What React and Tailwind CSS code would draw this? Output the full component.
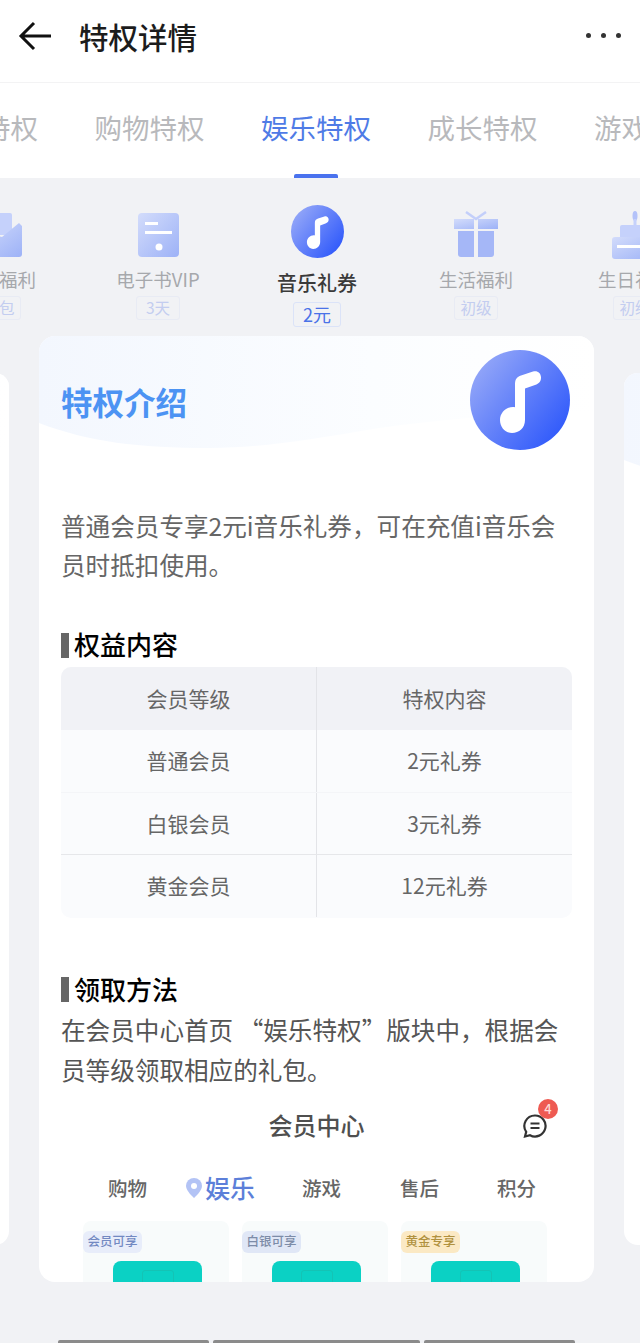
const font = { fontFamily: '"Noto Sans CJK SC", "Noto Sans", sans-serif' };

const TABS = ["专属特权", "购物特权", "娱乐特权", "成长特权", "游戏特权"];

const PERKS = [
  { name: "礼包福利", badge: "礼包", icon: "mail" },
  { name: "电子书VIP", badge: "3天", icon: "book" },
  { name: "音乐礼券", badge: "2元", icon: "music", active: true },
  { name: "生活福利", badge: "初级", icon: "gift" },
  { name: "生日礼包", badge: "初级", icon: "cake" },
];

const ROWS = [
  ["普通会员", "2元礼券", "border-[#f4f5f8]"],
  ["白银会员", "3元礼券", "border-[#e6e7ea]"],
  ["黄金会员", "12元礼券", "border-transparent"],
];

const MINI_CARDS = [
  { label: "会员可享", pill: "bg-[#e8edfa] text-[#7389c2]" },
  { label: "白银可享", pill: "bg-[#e0e7f6] text-[#7d8ca8]" },
  { label: "黄金专享", pill: "bg-[#fbe9c4] text-[#b0913f]" },
];

function SoftGradient({ id }) {
  return (
    <defs>
      <linearGradient id={id} x1="0" y1="0" x2="1" y2="1">
        <stop offset="0" stopColor="#d3dcfb" />
        <stop offset="1" stopColor="#9db2f7" />
      </linearGradient>
    </defs>
  );
}

function MusicCircle({ size, id }) {
  return (
    <svg width={size} height={size} viewBox="0 0 100 100">
      <defs>
        <linearGradient id={id} x1="0.05" y1="0.1" x2="1" y2="0.85">
          <stop offset="0" stopColor="#98aaf8" />
          <stop offset="1" stopColor="#2a55fb" />
        </linearGradient>
      </defs>
      <circle cx="50" cy="50" r="50" fill={`url(#${id})`} />
      <path
        d="M45 34c0-5 2-7 6-8.5l12-4c4-1.3 8 1 8 6 0 4-2 6-6 7.5l-10 3.5V70c0 8-6 13-13 13-7 0-12-6-12-13 0-7 6-13 13-13 1 0 2 .2 2 .4z"
        fill="#fff"
      />
    </svg>
  );
}

function Wave({ id }) {
  return (
    <svg className="absolute left-0 top-0" width="555" height="115" viewBox="0 0 555 115">
      <defs>
        <linearGradient id={id} x1="0" y1="0" x2="1" y2="0">
          <stop offset="0" stopColor="#f3f7fe" />
          <stop offset="0.6" stopColor="#fbfdff" />
          <stop offset="1" stopColor="#ffffff" />
        </linearGradient>
      </defs>
      <path d="M0 0H555V75C470 78 410 82 340 92C270 104 220 112 170 112C100 112 50 106 0 87Z" fill={`url(#${id})`} />
    </svg>
  );
}

function PerkIcon({ type }) {
  if (type === "music") return <MusicCircle size={53} id="musicSmall" />;
  const id = `soft-${type}`;
  return (
    <svg width="50" height="48" viewBox="0 0 50 48">
      <SoftGradient id={id} />
      {type === "book" && (
        <>
          <rect x="5" y="2" width="41" height="44" rx="4" fill={`url(#${id})`} />
          <rect x="12" y="11" width="13" height="3" fill="#fff" />
          <rect x="12" y="20" width="27" height="3" fill="#fff" />
          <circle cx="26" cy="36" r="3.5" fill="#fff" />
        </>
      )}
      {type === "gift" && (
        <>
          <path d="M15 1l10 7 10-7" fill="none" stroke="#c3cffa" strokeWidth="2.5" />
          <path d="M3 8h20v10H3zM27 8h20v10H27z" fill={`url(#${id})`} />
          <path d="M7 20h16v26H10a3 3 0 0 1-3-3zM27 20h16v23a3 3 0 0 1-3 3H27z" fill="#a5b7f7" />
        </>
      )}
      {type === "mail" && (
        <>
          <path d="M8 2h28a2 2 0 0 1 2 2v20H8z" fill="#c5d1fb" />
          <path d="M2 46V20l26 6 17-14 3 3v28a3 3 0 0 1-3 3z" fill={`url(#${id})`} />
        </>
      )}
      {type === "cake" && (
        <>
          <ellipse cx="25" cy="5" rx="2.5" ry="5" fill="#b3c2f9" />
          <rect x="23.5" y="8" width="3" height="6" fill="#c5d1fb" />
          <rect x="10" y="14" width="30" height="14" rx="2" fill="#c5d1fb" />
          <rect x="2" y="26" width="46" height="22" rx="3" fill={`url(#${id})`} />
          <rect x="7" y="34" width="36" height="3" fill="#fff" />
        </>
      )}
    </svg>
  );
}

function PerkItem({ perk }) {
  if (perk.active) {
    return (
      <div className="flex w-[159px] shrink-0 flex-col items-center pt-[27px]">
        <PerkIcon type={perk.icon} />
        <span className="mt-[11px] text-[20px] leading-[28px] font-medium text-[#3a3a3a]">{perk.name}</span>
        <span className="mt-[5px] flex h-[25px] w-[48px] items-center justify-center rounded-[3px] border border-[#dbe3f8] text-[18px] text-[#4a72e8]">
          {perk.badge}
        </span>
      </div>
    );
  }
  return (
    <div className="flex w-[159px] shrink-0 flex-col items-center pt-[33px]">
      <PerkIcon type={perk.icon} />
      <span className="mt-[7px] text-[18.5px] leading-[26px] text-[#a6a8ac]">{perk.name}</span>
      <span className="mt-[4px] flex h-[24px] w-[44px] items-center justify-center rounded-[3px] border border-[#e8ebf4] text-[15.5px] text-[#c3cdf0]">
        {perk.badge}
      </span>
    </div>
  );
}

function SectionTitle({ children }) {
  return (
    <div className="flex h-[30px] items-center">
      <span className="h-[25px] w-[8px] bg-[#666]" />
      <span className="ml-[5px] pb-[2px] text-[26px] leading-[28px] font-medium text-black">{children}</span>
    </div>
  );
}

function PrivilegeTable() {
  return (
    <div className="mt-[7px] w-[511px] overflow-hidden rounded-[10px] bg-[#fafbfd] text-center text-[21px] text-[#666]">
      <div className="grid h-[63px] grid-cols-[256px_255px] items-center bg-[#f1f2f6]">
        <span className="flex h-full items-center justify-center border-r border-[#e3e4e8]">会员等级</span>
        <span>特权内容</span>
      </div>
      {ROWS.map(([level, gift, line]) => (
        <div key={level} className={`grid h-[62.5px] grid-cols-[256px_255px] items-center border-b ${line}`}>
          <span className="flex h-full items-center justify-center border-r border-[#e3e4e8]">{level}</span>
          <span>{gift}</span>
        </div>
      ))}
    </div>
  );
}

function MiniScreenshot() {
  return (
    <div className="mt-[19px] -ml-[22px] w-[555px]">
      <div className="relative flex h-[34px] items-center justify-center text-[24px] font-medium text-[#4f4f4f]">
        会员中心
        <svg className="absolute left-[483px] top-[5px]" width="26" height="26" viewBox="0 0 26 26" fill="none">
          <path d="M13 2.5a10.5 10.5 0 1 1-5 19.7L3 23.5l1.2-4.6A10.5 10.5 0 0 1 13 2.5z" stroke="#333" strokeWidth="2.2" />
          <path d="M8.5 10.5h9M8.5 15h9" stroke="#333" strokeWidth="2" />
        </svg>
        <span className="absolute left-[499px] top-[-9px] flex h-[20px] w-[20px] items-center justify-center rounded-full bg-[#ee5a52] text-[13px] text-[#ffd9d6]">
          4
        </span>
      </div>
      <div className="mt-[29px] flex h-[34px] items-center pl-[69px] text-[19.5px] font-medium text-[#666]">
        <span className="w-[78px]">购物</span>
        <svg width="16" height="20" viewBox="0 0 16 20" className="mr-[3px]">
          <path d="M8 0a8 8 0 0 1 8 8c0 5-8 12-8 12S0 13 0 8a8 8 0 0 1 8-8z" fill="#b3c3f5" />
          <circle cx="8" cy="8" r="3" fill="#fff" />
        </svg>
        <span className="w-[97px] text-[25px] text-[#5c7fd9]">娱乐</span>
        <span className="w-[98px]">游戏</span>
        <span className="w-[97px]">售后</span>
        <span className="w-[40px]">积分</span>
      </div>
      <div className="mt-[16px] flex gap-[13px] pl-[44px]">
        {MINI_CARDS.map((card) => (
          <div key={card.label} className="h-[80px] w-[146px] rounded-t-[8px] bg-[#f8fbfb] pt-[10px]">
            <span className={`flex h-[22px] w-[59px] items-center justify-center rounded-[6px] text-[12.5px] font-medium ${card.pill}`}>
              {card.label}
            </span>
            <div className="mt-[8px] ml-[30px] h-[40px] w-[89px] rounded-[8px] bg-[#0bd1c4] pt-[9px]">
              <div className="mx-auto h-[24px] w-[32px] rounded-[3px] border border-[#14c3b5]" />
            </div>
          </div>
        ))}
      </div>
    </div>
  );
}

function SideCard({ id }) {
  return (
    <div className="relative h-[872px] w-[555px] shrink-0 overflow-hidden rounded-[14px] bg-white">
      <Wave id={id} />
    </div>
  );
}

export default function App() {
  return (
    <div className="flex h-[1343px] w-[640px] flex-col overflow-hidden bg-[#f1f2f5]" style={font}>
      {/* top bar */}
      <header className="flex h-[83px] items-center border-b border-[#f3f3f4] bg-white pb-[11px] pl-[18px] pr-[19px]">
        <svg width="34" height="30" viewBox="0 0 34 30" fill="none" stroke="#111" strokeWidth="3">
          <path d="M33 15H3M16 2L3 15l13 13" />
        </svg>
        <h1 className="ml-[27px] text-[29.5px] leading-[40px] font-medium text-[#1c1c1c]">特权详情</h1>
        <div className="ml-auto flex gap-[10px]">
          <span className="h-[5px] w-[5px] rounded-full bg-[#333]" />
          <span className="h-[5px] w-[5px] rounded-full bg-[#333]" />
          <span className="h-[5px] w-[5px] rounded-full bg-[#333]" />
        </div>
      </header>

      {/* tabs */}
      <nav className="flex h-[95px] justify-center gap-[56.5px] overflow-hidden bg-white pr-[8px]">
        {TABS.map((tab) => (
          <div key={tab} className="relative flex w-[110px] shrink-0 justify-center pt-[24px]">
            <span className={`text-[27.5px] leading-[40px] whitespace-nowrap ${tab === "娱乐特权" ? "text-[#4f7be6]" : "text-[#b8b9bc]"}`}>
              {tab}
            </span>
            {tab === "娱乐特权" && <span className="absolute bottom-0 h-[4px] w-[44px] rounded-t-[2px] bg-[#4a72ee]" />}
          </div>
        ))}
      </nav>

      {/* perk icons */}
      <div className="flex h-[158px] justify-center overflow-hidden pr-[6px]">
        {PERKS.map((perk) => (
          <PerkItem key={perk.name} perk={perk} />
        ))}
      </div>

      {/* cards */}
      <div className="flex h-[946px] items-center justify-center gap-[30px] pr-[7px]">
        <SideCard id="waveLeft" />
        <main className="relative h-[946px] w-[555px] shrink-0 overflow-hidden rounded-[16px] bg-white">
          <Wave id="waveMain" />

          <div className="relative pl-[22px]">
            <div className="flex items-center justify-between pt-[14px] pr-[24px]">
              <h2 className="pt-[2px] text-[31.5px] leading-[44px] font-bold text-[#4c93f3]">特权介绍</h2>
              <MusicCircle size={100} id="musicBig" />
            </div>

            <p className="mt-[56px] w-[500px] text-[24.6px] leading-[39px] text-[#666]">
              普通会员专享2元i音乐礼券，可在充值i音乐会员时抵扣使用。
            </p>

            <div className="mt-[46px]">
              <SectionTitle>权益内容</SectionTitle>
            </div>
            <PrivilegeTable />

            <div className="mt-[57px]">
              <SectionTitle>领取方法</SectionTitle>
            </div>
            <p className="mt-[4px] w-[510px] text-[24.6px] leading-[40px] text-[#555]">
              在会员中心首页 “娱乐特权”版块中，根据会员等级领取相应的礼包。
            </p>

            <MiniScreenshot />
          </div>
        </main>
        <SideCard id="waveRight" />
      </div>

      {/* clipped row at the bottom edge */}
      <div className="mt-[58px] flex gap-[4px] pl-[58px]">
        <span className="h-[3px] w-[151px] rounded-t-[2px] bg-[#8b8b8b]" />
        <span className="h-[3px] w-[207px] rounded-t-[2px] bg-[#8b8b8b]" />
        <span className="h-[3px] w-[151px] rounded-t-[2px] bg-[#8b8b8b]" />
      </div>
    </div>
  );
}
